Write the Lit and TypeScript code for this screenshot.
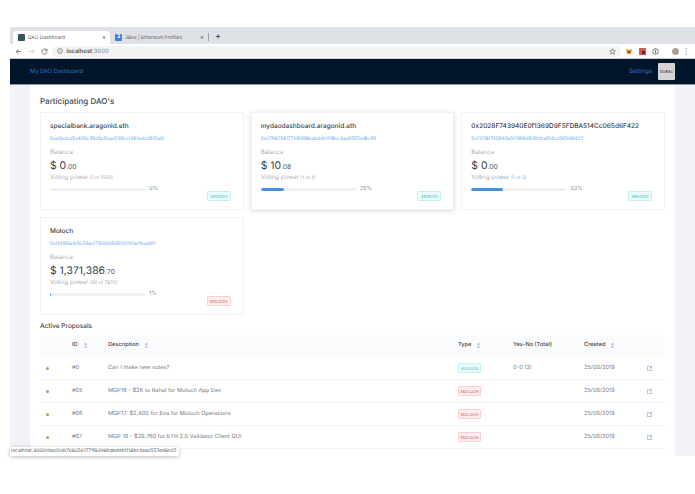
import { LitElement, html, css, svg } from "lit";
import { customElement } from "lit/decorators.js";

const daos = [
  { name: "specialbank.aragonid.eth", addr: "0xe0edce5a400c39d0e5bad239ccf361addd9f0a0f", whole: "0", cents: ".00", of: "(1 of 1500)", pct: 0, type: "ARAGON", raised: false },
  { name: "mydaodashboard.aragonid.eth", addr: "0xb7682561771f8398babddb1118bc4aa0557ed8c65", whole: "10", cents: ".08", of: "(1 of 4)", pct: 25, type: "ARAGON", raised: true },
  { name: "0x2028F743940E0f1369D9F5FDBA514Cc065d6F422", addr: "0x2028f743940e0f1369d9f5fdba514cc065d6f422", whole: "0", cents: ".00", of: "(1 of 3)", pct: 33, type: "ARAGON", raised: false },
  { name: "Moloch", addr: "0x1fd169a4f5c59acf79d0fd5d91d1201ef1bce9f1", whole: "1,371,386", cents: ".70", of: "(50 of 7823)", pct: 1, type: "MOLOCH", raised: false },
];

const rows = [
  { id: "#0", desc: "Can I make new votes?", type: "ARAGON", votes: "0-0 (3)" },
  { id: "#85", desc: "MGP16 - $2K to Rahul for Moloch App Dev", type: "MOLOCH", votes: "" },
  { id: "#86", desc: "MGP17: $2,400 for Eva for Moloch Operations", type: "MOLOCH", votes: "" },
  { id: "#87", desc: "MGP 18 - $29,760 for ETH 2.0 Validator Client GUI", type: "MOLOCH", votes: "" },
];

const sortIcon = svg`<svg class="sort" viewBox="0 0 6 8" width="5" height="7"><path d="M3 0.5 5 3H1zM3 7.5 1 5h4z" fill="#b4b9c2"/></svg>`;

@customElement("app-root")
export class AppRoot extends LitElement {
  static styles = css`
    :host { display: block; width: 695px; height: 494px; background: #fff; overflow: hidden; position: relative; font-family: Inter, "Liberation Sans", sans-serif; color: #3b3f46; text-rendering: geometricPrecision; }
    .window { margin-left: 10px; padding-top: 27px; height: 456px; box-sizing: border-box; display: flex; flex-direction: column; }
    .tabs { height: 17px; background: #dee1e6; display: flex; align-items: flex-end; padding-left: 3px; font-size: 4.9px; color: #60646a; flex: none; }
    .tab { width: 97px; height: 13px; display: flex; align-items: center; gap: 3px; padding-left: 5px; box-sizing: border-box; border-radius: 4px 4px 0 0; }
    .tab.on { background: #fff; color: #5a5e64; }
    .tab .x { margin-left: auto; margin-right: 4px; font-size: 6px; color: #555; }
    .tab + .tab .x { margin-right: 3px; }
    .fav { width: 7px; height: 7px; border-radius: 1px; flex: none; }
    .fav.a { background: #37505a; }
    .fav.b { background: #3d7fd9; color: #fff; font-size: 5.5px; line-height: 7px; text-align: center; font-weight: 700; }
    .sep { width: 1px; height: 8px; background: #9aa0a6; margin: 0 0 3px 1px; }
    .plus { font-size: 9px; line-height: 14px; color: #333; margin-left: 6px; }
    .toolbar { height: 15px; background: #fff; display: flex; align-items: center; flex: none; border-bottom: 1px solid #c8ccd1; box-sizing: border-box; }
    .nav-ic { flex: none; margin-left: 6px; }
    .nav-ic.first { margin-left: 5px; }
    .omni { flex: 1; height: 11px; background: #f1f3f4; border-radius: 6px; margin: 0 5.5px 0 4px; display: flex; align-items: center; padding: 0 5px; font-size: 5.9px; color: #80868b; gap: 3.5px; }
    .omni b { color: #3a3d41; font-weight: 500; }
    .omni .star { margin-left: auto; }
    .ext { display: flex; align-items: center; gap: 6.5px; padding-right: 8px; flex: none; }
    .avatar { width: 7px; height: 7px; border-radius: 50%; background: #a79f98; margin-left: 6px; }
    .topbar { height: 26px; background: #03152a; display: flex; align-items: center; padding: 0 20px 0 20px; font-size: 5.7px; color: #2f6fc0; flex: none; border-bottom: 1px solid #8d99a8; box-sizing: border-box; }
    .settings { margin-left: auto; margin-right: 6px; font-size: 6px; }
    .user { width: 17px; height: 17px; background: #d4d4d4; border-radius: 1px; color: #333; font-size: 4px; display: flex; align-items: center; justify-content: center; }
    .body { flex: 1; min-height: 0; background: #f1f3f8; padding: 0 20px; overflow: hidden; }
    .content { background: #fff; padding: 11px 10px 0; height: 100%; box-sizing: border-box; }
    h1 { font-size: 8px; line-height: 11px; font-weight: 500; margin: 0 0 5px; color: #3f434a; }
    .cards { display: grid; grid-template-columns: repeat(3, 1fr); gap: 7px; }
    .card { height: 98px; box-sizing: border-box; border: 1px solid #f1f2f5; padding: 9px 9px 0; display: flex; flex-direction: column; position: relative; }
    .card.raised { border-color: #f0f0f2; box-shadow: 0 1px 5px rgba(30, 40, 70, 0.16); }
    .name { font-size: 6.5px; line-height: 9px; font-weight: 500; color: #3c4047; white-space: nowrap; }
    .addr { font-size: 4.7px; line-height: 6px; color: #6ba7ee; margin-top: 5px; white-space: nowrap; }
    .lab { font-size: 6.1px; line-height: 8px; color: #a9adb4; margin-top: 7px; }
    .amt { font-size: 10.4px; line-height: 13px; margin-top: 2px; color: #3b3f46; }
    .amt small { font-size: 6.8px; color: #555; }
    .vp { font-size: 6.1px; line-height: 8px; color: #a9adb4; margin-top: 1px; }
    .vp small { font-size: 4.7px; }
    .prog { display: flex; align-items: center; gap: 4px; font-size: 5.6px; color: #8e9298; height: 8px; margin-top: 3px; }
    .track { width: 95px; height: 3px; background: #f0f1f3; border-radius: 2px; overflow: hidden; flex: none; }
    .fill { height: 100%; background: #4a90e2; border-radius: 2px; }
    .badge { box-sizing: border-box; display: inline-flex; align-items: center; justify-content: center; border-radius: 1.5px; font-size: 4px; height: 10px; border: 1px solid; }
    .badge.ARAGON { background: #e9fbfb; border-color: #c6f0f0; color: #58c3c6; width: 24px; }
    .badge.MOLOCH { background: #fdeeee; border-color: #f8cfcf; color: #d8605f; width: 24px; }
    .card .badge { position: absolute; right: 12px; bottom: 8px; }
    h2 { font-size: 6.5px; line-height: 9px; font-weight: 500; margin: 7px 0 4px; color: #3f434a; }
    .tr { display: grid; grid-template-columns: 32px 36px 350px 55px 71px 61px 20px; align-items: center; height: 23px; font-size: 5.65px; color: #777b82; border-bottom: 1px solid #f3f4f6; box-sizing: border-box; }
    .tr.head { height: 22px; background: #fafbfc; color: #3f434a; font-weight: 500; border-bottom: none; padding-bottom: 2px; }
    .th { display: flex; align-items: center; gap: 5px; }
    .dot { width: 3px; height: 3px; border-radius: 50%; background: #7dba5d; margin-left: 6px; }
    .tr .badge.ARAGON, .tr .badge.MOLOCH { width: 23px; height: 10px; font-size: 4.1px; }
    .open { display: block; margin-left: 2px; }
    .status { position: absolute; left: 10px; top: 447px; width: 169px; height: 9px; background: #fff; font-size: 4.85px; line-height: 9px; color: #555a60; padding-left: 1px; box-sizing: border-box; white-space: nowrap; box-shadow: 0 1px 4px rgba(0, 0, 0, 0.28); border-radius: 0 2px 2px 0; }
  `;

  private card(d: (typeof daos)[number]) {
    return html`<div class="card ${d.raised ? "raised" : ""}">
      <div class="name">${d.name}</div>
      <div class="addr">${d.addr}</div>
      <div class="lab">Balance</div>
      <div class="amt">$ ${d.whole}<small>${d.cents}</small></div>
      <div class="vp">Voting power <small>${d.of}</small></div>
      <div class="prog">
        <div class="track"><div class="fill" style="width:${d.pct}%"></div></div>
        <span>${d.pct}%</span>
      </div>
      <span class="badge ${d.type}">${d.type}</span>
    </div>`;
  }

  render() {
    return html`
      <div class="window">
        <div class="tabs">
          <div class="tab on"><span class="fav a"></span>DAO Dashboard<span class="x">×</span></div>
          <div class="tab"><span class="fav b">3</span>3Box | Ethereum Profiles<span class="x">×</span></div>
          <span class="sep"></span><span class="plus">+</span>
        </div>
        <div class="toolbar">
          <svg class="nav-ic first" width="7" height="7" viewBox="0 0 8 8"><path d="M7 4H1.5M4 1.2 1.2 4 4 6.8" fill="none" stroke="#5f6368" stroke-width=".9"/></svg>
          <svg class="nav-ic" width="7" height="7" viewBox="0 0 8 8"><path d="M1 4h5.5M4 1.2 6.8 4 4 6.8" fill="none" stroke="#c4c7cb" stroke-width=".9"/></svg>
          <svg class="nav-ic" width="7" height="7" viewBox="0 0 8 8"><path d="M6.6 2.6A3 3 0 1 0 7 4.2M6.9 1v2H4.9" fill="none" stroke="#5f6368" stroke-width=".9"/></svg>
          <div class="omni">
            <svg width="6" height="6" viewBox="0 0 8 8"><circle cx="4" cy="4" r="3.3" fill="none" stroke="#5f6368" stroke-width=".8"/><path d="M4 3.4v2.4M4 2v.8" stroke="#5f6368" stroke-width=".8"/></svg>
            <span><b>localhost</b>:3000</span>
            <svg class="star" width="7" height="7" viewBox="0 0 10 10"><path d="M5 1l1.2 2.7 2.9.3-2.2 1.9.7 2.9L5 7.3 2.4 8.8l.7-2.9L.9 4l2.9-.3z" fill="none" stroke="#5f6368" stroke-width=".9"/></svg>
          </div>
          <div class="ext">
            <svg width="6" height="6" viewBox="0 0 6 6"><path d="M0 1l3 1 3-1-1 5H1z" fill="#e8912d"/><path d="M2 3h2v2H2z" fill="#7a4a20"/></svg>
            <svg width="7" height="7" viewBox="0 0 7 7"><rect width="7" height="7" fill="#cf5a5a"/><path d="M3 3h3v3H3z" fill="#7d2020"/></svg>
            <svg width="7" height="7" viewBox="0 0 8 8"><circle cx="4" cy="4" r="3.2" fill="none" stroke="#5f6368"/><path d="M4 2v4" stroke="#5f6368"/></svg>
            <span class="avatar"></span>
            <svg width="2" height="7" viewBox="0 0 2 7"><path d="M1 .5v.9M1 3v.9M1 5.5v.9" stroke="#5f6368" stroke-width="1"/></svg>
          </div>
        </div>
        <div class="topbar">
          <span>My DAO Dashboard</span>
          <span class="settings">Settings</span>
          <span class="user">DoBAc</span>
        </div>
        <div class="body">
          <div class="content">
            <h1>Participating DAO's</h1>
            <div class="cards">${daos.map((d) => this.card(d))}</div>
            <h2>Active Proposals</h2>
            <div class="tr head">
              <span></span>
              <span class="th">ID ${sortIcon}</span>
              <span class="th">Description ${sortIcon}</span>
              <span class="th">Type ${sortIcon}</span>
              <span class="th">Yes-No (Total)</span>
              <span class="th">Created ${sortIcon}</span>
              <span></span>
            </div>
            ${rows.map(
              (r) => html`<div class="tr">
                <span class="dot"></span>
                <span>${r.id}</span>
                <span>${r.desc}</span>
                <span><span class="badge ${r.type}">${r.type}</span></span>
                <span>${r.votes}</span>
                <span>25/08/2019</span>
                <svg class="open" width="5" height="5" viewBox="0 0 6 6"><path d="M5.5 3.5v2h-5v-5h2M3 .5h2.5V3M5.5.5 2.8 3.2" fill="none" stroke="#5f9fe6" stroke-width=".7"/></svg>
              </div>`
            )}
          </div>
        </div>
      </div>
      <div class="status">localhost:3000/dao/0xb7682561771f8398babddb1118bc4aa0557ed8c65</div>
    `;
  }
}
